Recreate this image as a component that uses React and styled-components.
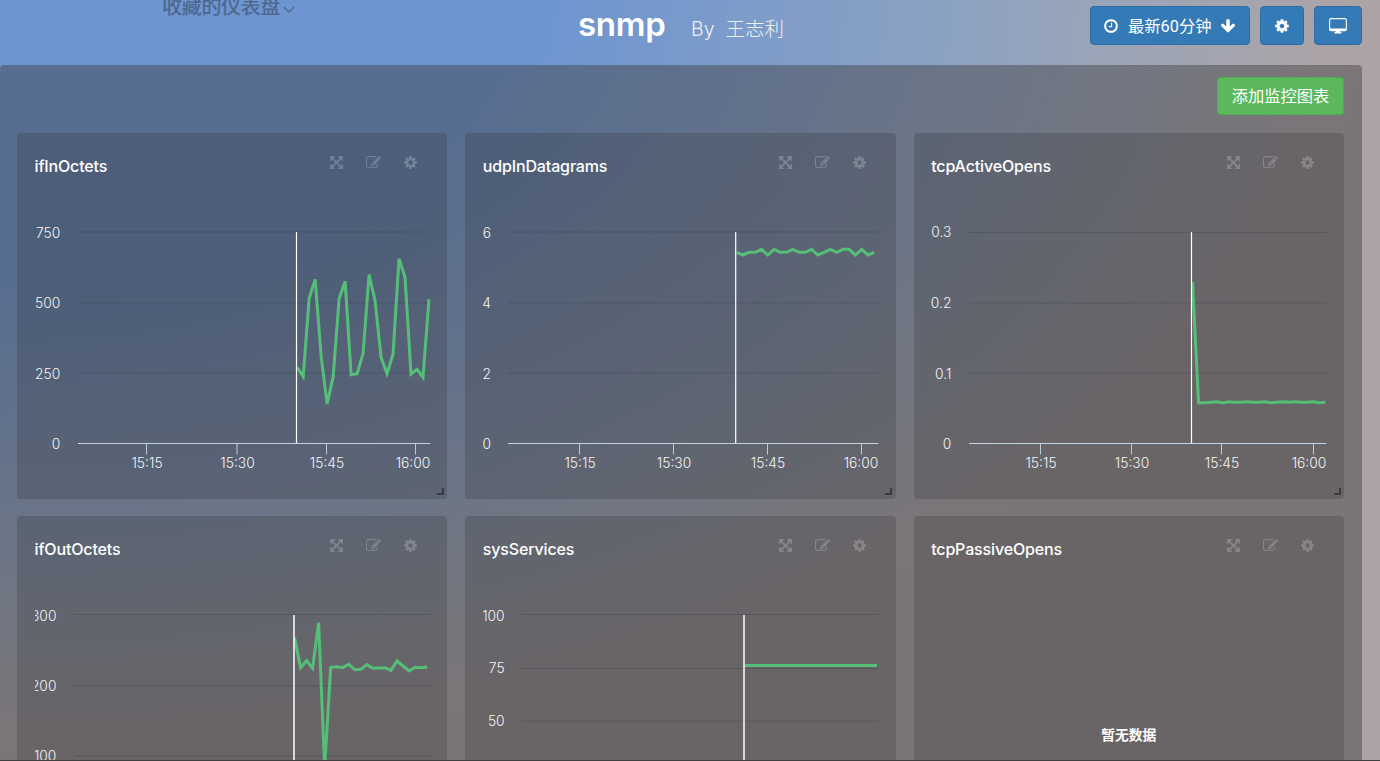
import React from "react";
import styled, { createGlobalStyle } from "styled-components";

const GlobalStyle = createGlobalStyle`
  * { box-sizing: border-box; }
  body {
    margin: 0;
    overflow: hidden;
    background: #404040;
    font-family: Inter, "Noto Sans CJK SC", sans-serif;
    color: #fff;
  }
`;

const Page = styled.div`
  height: 760px;
  overflow: hidden;
  display: flex;
  flex-direction: column;
  background: radial-gradient(1380px 761px at 0 0, #6c95d1 38%, #8ca2c2 69%, #9ca5b6 82%, #aea3a4 99%);
`;

const Header = styled.header`
  height: 65px;
  flex: none;
  display: flex;
  align-items: flex-start;
  padding-right: 18.5px;
`;

const FavoriteMenu = styled.div`
  width: 578px;
  padding-left: 162px;
  margin-top: -8px;
  display: flex;
  align-items: center;
  gap: 3px;
  font-size: 20px;
  line-height: 30px;
  font-weight: 500;
  letter-spacing: -0.3px;
  color: #4f678c;
  svg { margin-top: 5px; }
`;

const Heading = styled.div`
  flex: 1;
  display: flex;
  align-items: baseline;
  margin-top: 4px;
`;

const Title = styled.h1`
  margin: 0;
  width: 113px;
  font-size: 33px;
  line-height: 40px;
  font-weight: 600;
  letter-spacing: -0.3px;
`;

const Author = styled.span`
  font-size: 19.5px;
  font-weight: 300;
  color: #eceff4;
  white-space: pre;
`;

const Buttons = styled.div`
  display: flex;
  margin-top: 6px;
  gap: 10px;
`;

const Button = styled.button`
  height: ${(p) => (p.$success ? 38 : 39)}px;
  width: ${(p) => p.$width}px;
  display: flex;
  align-items: center;
  justify-content: center;
  gap: 9px;
  padding: ${(p) => (p.$success ? "0 0 2px" : "0")};
  border: 1px solid ${(p) => (p.$success ? "#4cae4c" : "#2e6da4")};
  border-radius: 4px;
  background: ${(p) => (p.$success ? "#5cb85c" : "#337ab7")};
  color: #fff;
  font: 400 16.3px Roboto, "Noto Sans CJK SC", sans-serif;
  white-space: nowrap;
`;

const Label = styled.span`
  padding-bottom: 2px;
`;

const Panel = styled.main`
  width: 1361.5px;
  flex: 1;
  padding: 12px 17.5px 0 17px;
  border-radius: 4px 4px 0 0;
  background: rgba(64, 62, 64, 0.45);
`;

const Toolbar = styled.div`
  display: flex;
  justify-content: flex-end;
  margin-bottom: 18px;
`;

const Grid = styled.div`
  display: grid;
  grid-template-columns: repeat(3, 1fr);
  grid-auto-rows: 366px;
  gap: 17px 18px;
`;

const CardBox = styled.section`
  position: relative;
  display: flex;
  flex-direction: column;
  padding-left: 17.5px;
  border-radius: 4px;
  background: rgba(39, 40, 44, 0.22);
  overflow: hidden;
`;

const CardHeader = styled.div`
  height: 71px;
  flex: none;
  display: flex;
  justify-content: space-between;
  padding: 21px 29px 0 0;
`;

const CardTitle = styled.h2`
  margin: 0;
  font-size: 16px;
  line-height: 24px;
  font-weight: 500;
  letter-spacing: -0.15px;
`;

const CardActions = styled.div`
  display: flex;
  align-items: center;
  height: 16px;
  gap: 22px;
  color: rgba(255, 255, 255, 0.21);
`;

const ChartSvg = styled.svg`
  display: block;
  font-family: Inter, sans-serif;
  font-weight: 300;
  font-size: 13.8px;
  letter-spacing: 0;
  fill: #f2f4f6;
`;

const ResizeHandle = styled.i`
  position: absolute;
  right: 3.5px;
  bottom: 4px;
  width: 7px;
  height: 7px;
  border: solid rgba(35, 38, 45, 0.65);
  border-width: 0 2px 2px 0;
`;

const Empty = styled.div`
  margin-left: -17.5px;
  padding-top: 138px;
  text-align: center;
  font-size: 13.8px;
  line-height: 20px;
  font-weight: 700;
`;

const ICONS = {
  expand:
    "M1411 541l-355 355 355 355 144-144q29-31 70-14 39 17 39 59v448q0 26-19 45t-45 19h-448q-42 0-59-40-17-39 14-69l144-144-355-355-355 355 144 144q31 30 14 69-17 40-59 40h-448q-26 0-45-19t-19-45v-448q0-42 40-59 39-17 69 14l144 144 355-355-355-355-144 144q-19 19-45 19-12 0-24-5-40-17-40-59v-448q0-26 19-45t45-19h448q42 0 59 40 17 39-14 69l-144 144 355 355 355-355-144-144q-31-30-14-69 17-40 59-40h448q26 0 45 19t19 45v448q0 42-39 59-13 5-25 5-26 0-45-19z",
  edit:
    "M888 1184l116-116-152-152-116 116v56h96v96h56zm440-720q-16-16-33 1l-350 350q-17 17-1 33t33-1l350-350q17-17 1-33zm80 594v190q0 119-84.5 203.5t-203.5 84.5h-832q-119 0-203.5-84.5t-84.5-203.5v-832q0-119 84.5-203.5t203.5-84.5h832q63 0 117 25 15 7 18 23 3 17-9 29l-49 49q-14 14-32 8-23-6-45-6h-832q-66 0-113 47t-47 113v832q0 66 47 113t113 47h832q66 0 113-47t47-113v-126q0-13 9-22l64-64q15-15 35-7t20 29zm-96-738l288 288-672 672h-288v-288zm444 132l-92 92-288-288 92-92q28-28 68-28t68 28l152 152q28 28 28 68t-28 68z",
  cog:
    "M1152 896q0-106-75-181t-181-75-181 75-75 181 75 181 181 75 181-75 75-181zm512-109v222q0 12-8 23t-20 13l-185 28q-19 54-39 91 35 50 107 138 10 12 10 25t-9 23q-27 37-99 108t-94 71q-12 0-26-9l-138-108q-44 23-91 38-16 136-29 186-7 28-36 28h-222q-14 0-24.5-8.5t-11.5-21.5l-28-184q-49-16-90-37l-141 107q-10 9-25 9-14 0-25-11-126-114-165-168-7-10-7-23 0-12 8-23 15-21 51-66.5t54-70.5q-27-50-41-99l-183-27q-13-2-21-12.5t-8-23.5v-222q0-12 8-23t19-13l186-28q14-46 39-92-40-57-107-138-10-12-10-24 0-10 9-23 26-36 98.5-107.5t94.5-71.5q13 0 26 10l138 107q44-23 91-38 16-136 29-186 7-28 36-28h222q14 0 24.5 8.5t11.5 21.5l28 184q49 16 90 37l142-107q9-9 24-9 13 0 25 10 129 119 165 170 7 8 7 22 0 12-8 23-15 21-51 66.5t-54 70.5q26 50 41 98l183 28q13 2 21 12.5t8 23.5z",
  clock:
    "M1024 544v448q0 14-9 23t-23 9h-320q-14 0-23-9t-9-23v-64q0-14 9-23t23-9h224v-352q0-14 9-23t23-9h64q14 0 23 9t9 23zm416 352q0-148-73-273t-198-198-273-73-273 73-198 198-73 273 73 273 198 198 273 73 273-73 198-198 73-273zm224 0q0 209-103 385.5t-279.5 279.5-385.5 103-385.5-103-279.5-279.5-103-385.5 103-385.5 279.5-279.5 385.5-103 385.5 103 279.5 279.5 103 385.5z",
  down:
    "M1675 832q0 53-37 90l-651 652q-39 37-91 37-53 0-90-37l-651-652q-38-36-38-90 0-53 38-91l74-75q39-37 91-37 53 0 90 37l294 294v-704q0-52 38-90t90-38h128q52 0 90 38t38 90v704l294-294q37-37 90-37 52 0 91 37l75 75q37 39 37 91z",
};

const Icon = ({ name, size }) => (
  <svg width={size} height={size} viewBox="0 0 1792 1792" fill="currentColor">
    <path d={ICONS[name]} />
  </svg>
);

const MonitorIcon = () => (
  <svg width="18" height="16" viewBox="0 0 18 16">
    <rect x="0.65" y="0.65" width="16.7" height="12" rx="1.5" fill="none" stroke="#fff" strokeWidth="1.1" />
    <path d="M1 10.4h16v2H1zM6.7 12h4.6v2h1.2v1.6h-7V14h1.2z" fill="#fff" />
  </svg>
);

const series = (x0, step, ys) => ys.map((y, i) => [x0 + step * i, y]);
const scaled = (offset, values) => values.map((v) => v / 3 - offset);

const CHARTS = [
  {
    title: "ifInOctets",
    left: 43,
    labelX: 25.2,
    rows: [["750", 28, 34], ["500", 99, 104], ["250", 169, 174.5]],
    ticks: [["15:15", 111.5], ["15:30", 202], ["15:45", 291.5], ["16:00", 380.5]],
    cursor: 261.5,
    points: series(262.2, 5.99, scaled(74, [712, 740, 505, 448, 680, 822, 740, 506, 454, 734, 731, 670, 434, 512, 682, 731, 672, 386, 442, 732, 718, 742, 508])),
  },
  {
    title: "udpInDatagrams",
    left: 25,
    labelX: 8,
    rows: [["6", 28, 34], ["4", 99, 104], ["2", 169, 174.5]],
    ticks: [["15:15", 96.5], ["15:30", 190.5], ["15:45", 284.5], ["16:00", 378.5]],
    cursor: 252.7,
    points: series(253.5, 6.26, scaled(74, [367, 375, 367, 367, 358, 375, 358, 367, 367, 358, 367, 367, 358, 375, 367, 358, 367, 358, 358, 375, 358, 375, 367])),
  },
  {
    title: "tcpActiveOpens",
    left: 38,
    labelX: 20.4,
    rows: [["0.3", 28.5, 32.8], ["0.2", 99, 104], ["0.1", 169, 174.5]],
    ticks: [["15:15", 109.5], ["15:30", 200.5], ["15:45", 290.5], ["16:00", 382.5]],
    cursor: 260.5,
    points: series(261.5, 6.04, scaled(74, [456, 818, 818, 817, 815, 818, 815, 817, 817, 815, 817, 817, 815, 818, 817, 815, 817, 815, 817, 817, 815, 818, 817])),
  },
  {
    title: "ifOutOctets",
    left: 39,
    labelX: 21.4,
    rows: [["300", 27.5, 33.6], ["200", 99, 103.5], ["100", 168.7, 174.2]],
    ticks: [["15:15", 109], ["15:30", 200], ["15:45", 290], ["16:00", 380]],
    cursor: 259,
    wideCursor: true,
    points: series(259.5, 6.03, scaled(77, [382, 473, 452, 475, 338, 775, 472, 470, 473, 463, 479, 478, 464, 475, 474, 473, 481, 453, 468, 483, 472, 473, 471])),
  },
  {
    title: "sysServices",
    left: 39,
    labelX: 21.6,
    rows: [["100", 27.5, 33.6], ["75", 81.5, 86], ["50", 134, 139.3], ["25", 187, 192]],
    ticks: [["15:15", 109], ["15:30", 200], ["15:45", 290], ["16:00", 380]],
    cursor: 261,
    wideCursor: true,
    points: [[261.5, 78.5], [394, 78.5]],
  },
  { title: "tcpPassiveOpens" },
];

const Chart = ({ data }) => {
  const right = 395.3;
  return (
    <ChartSvg width="412" height="295" viewBox="0 0 412 295">
      {data.rows.map(([label, y, baseline]) => (
        <g key={label}>
          <line x1={data.left} x2={right} y1={y} y2={y} stroke="rgba(45,50,65,.27)" />
          <text x={data.labelX} y={baseline} textAnchor="end">{label}</text>
        </g>
      ))}
      <text x={data.labelX} y="245" textAnchor="end">0</text>
      <polyline points={data.points.map((p) => p.join(",")).join(" ")} fill="none" stroke="#55bf78" strokeWidth="3" />
      <line
        x1={data.cursor}
        x2={data.cursor}
        y1="28"
        y2="239"
        stroke={data.wideCursor ? "rgba(255,255,255,.75)" : "#fff"}
        strokeWidth={data.wideCursor ? 2 : 1.2}
      />
      <line x1={data.left} x2={right} y1="239.5" y2="239.5" stroke="#c3d3e2" />
      {data.ticks.map(([label, x], i) => (
        <g key={label}>
          <line x1={x} x2={x} y1="240" y2="250.5" stroke="#b9cbdd" />
          <text x={i === 3 ? right : x + 0.5} y="264" textAnchor={i === 3 ? "end" : "middle"}>{label}</text>
        </g>
      ))}
    </ChartSvg>
  );
};

const Card = ({ data }) => (
  <CardBox>
    <CardHeader>
      <CardTitle>{data.title}</CardTitle>
      <CardActions>
        <Icon name="expand" size={15} />
        <Icon name="edit" size={15} />
        <Icon name="cog" size={15} />
      </CardActions>
    </CardHeader>
    {data.points ? <Chart data={data} /> : <Empty>暂无数据</Empty>}
    <ResizeHandle />
  </CardBox>
);

export default function App() {
  return (
    <>
      <GlobalStyle />
      <Page>
        <Header>
          <FavoriteMenu>
            收藏的仪表盘
            <svg width="12" height="8" viewBox="0 0 12 8" fill="none" stroke="currentColor" strokeWidth="1.3">
              <path d="M1 1l5 5 5-5" />
            </svg>
          </FavoriteMenu>
          <Heading>
            <Title>snmp</Title>
            <Author>{"By  王志利"}</Author>
          </Heading>
          <Buttons>
            <Button $width={160.5}>
              <Icon name="clock" size={16} />
              <Label>最新60分钟</Label>
              <Icon name="down" size={16} />
            </Button>
            <Button $width={44}>
              <Icon name="cog" size={16} />
            </Button>
            <Button $width={47.5}>
              <MonitorIcon />
            </Button>
          </Buttons>
        </Header>
        <Panel>
          <Toolbar>
            <Button $success $width={127}>添加监控图表</Button>
          </Toolbar>
          <Grid>
            {CHARTS.map((c) => (
              <Card key={c.title} data={c} />
            ))}
          </Grid>
        </Panel>
      </Page>
    </>
  );
}
